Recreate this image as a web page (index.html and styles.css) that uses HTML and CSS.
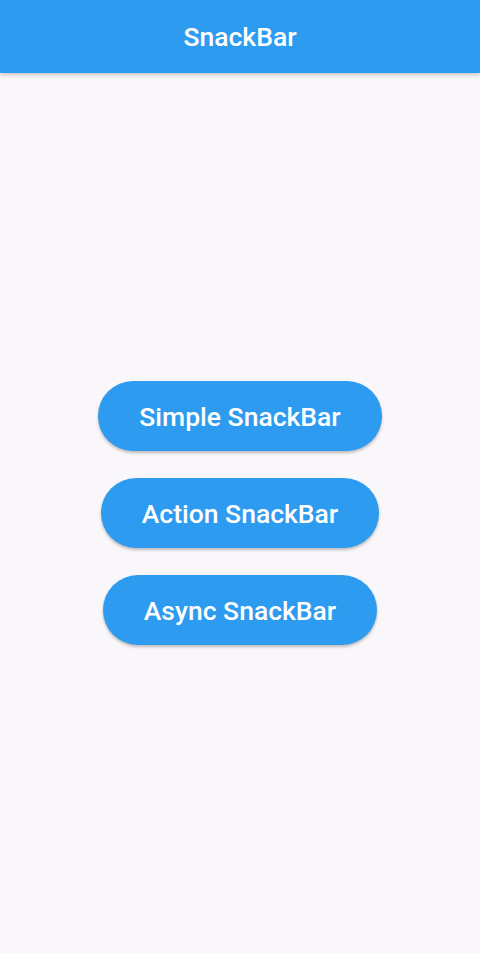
FILE: index.html
```html
<!DOCTYPE html>
<html>
<head>
<meta charset="utf-8">
<link rel="stylesheet" href="styles.css">
</head>
<body>
<div class="app">
  <header class="appbar"><h1 class="title">SnackBar</h1></header>
  <main class="content">
    <button class="btn">Simple SnackBar</button>
    <button class="btn">Action SnackBar</button>
    <button class="btn">Async SnackBar</button>
  </main>
</div>
</body>
</html>
```
FILE: styles.css
```css
html, body { margin: 0; padding: 0; }
body { background: #f9f7fa; font-family: Roboto, "Noto Sans", sans-serif; }
.app { display: flex; flex-direction: column; height: 953px; }
.appbar {
  height: 73px; background: #2d9bef; display: flex; align-items: center; justify-content: center;
  box-shadow: 0 2px 4px rgba(0,0,0,0.2); position: relative; z-index: 1; flex: none;
}
.title { margin: 0; color: #fff; font-size: 26.5px; font-weight: 500; letter-spacing: 0; }
.content { flex: 1; display: flex; flex-direction: column; align-items: center; justify-content: center; gap: 27px; }
.btn {
  height: 70px; padding: 0 41px; border: none; border-radius: 35px; background: #2d9bef; color: #fff;
  font-family: Roboto, sans-serif; font-size: 26.5px; font-weight: 500;
  box-shadow: 0 2px 3px rgba(0,0,0,0.25);
}
```
